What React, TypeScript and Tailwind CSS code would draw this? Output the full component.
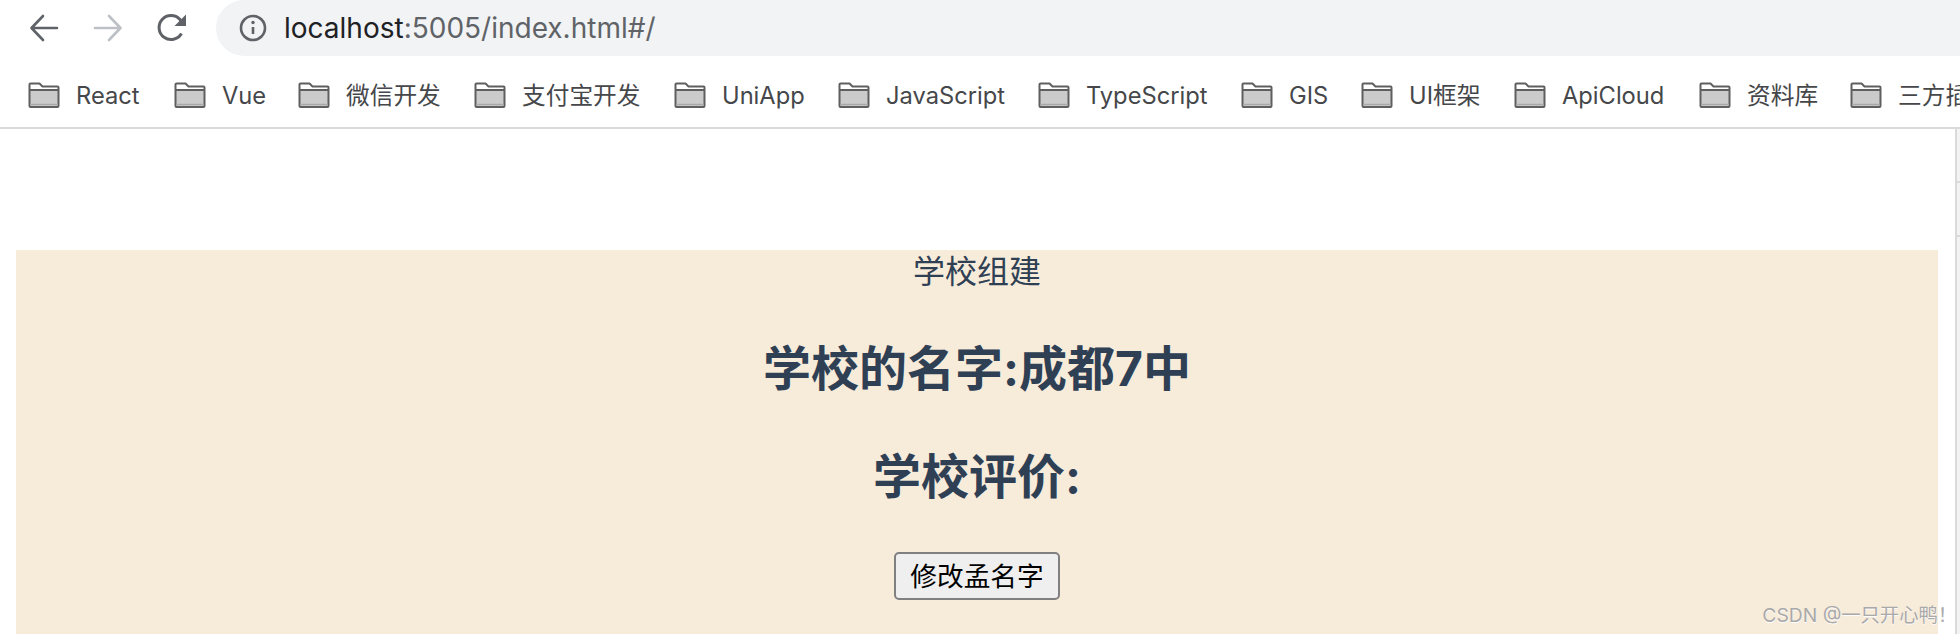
const bookmarks = [
  { label: "React", width: "w-[146px]" },
  { label: "Vue", width: "w-[124px]" },
  { label: "微信开发", width: "w-[176px]" },
  { label: "支付宝开发", width: "w-[200px]" },
  { label: "UniApp", width: "w-[164px]" },
  { label: "JavaScript", width: "w-[200px]" },
  { label: "TypeScript", width: "w-[203px]" },
  { label: "GIS", width: "w-[120px]" },
  { label: "UI框架", width: "w-[153px]" },
  { label: "ApiCloud", width: "w-[185px]" },
  { label: "资料库", width: "w-[151px]" },
  { label: "三方插件", width: "w-[200px]" },
];

function Folder() {
  return (
    <svg width="32" height="26" viewBox="0 0 32 26" className="shrink-0">
      <path d="M1.5 8V2.5a1 1 0 0 1 1-1h9l3 3h15a1 1 0 0 1 1 1V24a1 1 0 0 1-1 1h-27a1 1 0 0 1-1-1Z" fill="#fff" />
      <path d="M2 8h28v17H2Z" fill="#cbcbcb" />
      <path d="M1.5 8V2.5a1 1 0 0 1 1-1h9l3 3h15a1 1 0 0 1 1 1V24a1 1 0 0 1-1 1h-27a1 1 0 0 1-1-1Z M1.5 8h29" fill="none" stroke="#5f5f5f" strokeWidth="2" strokeLinejoin="round" />
      <path d="M2 22.5h28" stroke="#a8a8a8" strokeWidth="1.5" />
    </svg>
  );
}

export default function App() {
  return (
    <div className="h-[634px] w-[1960px] overflow-hidden bg-white relative font-['Inter','Noto_Sans_CJK_SC',sans-serif]">
      <div className="flex h-[56px] items-center">
        <div className="flex w-[216px] shrink-0 items-center pl-[29px]">
          <svg width="30" height="30" viewBox="0 0 30 30" fill="none" stroke="#5f6368" strokeWidth="2.6" strokeLinecap="round" strokeLinejoin="round">
            <path d="M28 15H3M14 3 2.5 15 14 27" />
          </svg>
          <svg className="ml-[34px]" width="30" height="30" viewBox="0 0 30 30" fill="none" stroke="#bdc1c6" strokeWidth="2.6" strokeLinecap="round" strokeLinejoin="round">
            <path d="M2 15h25M16 3l11.500 12L16 27" />
          </svg>
          <svg className="ml-[34px]" width="30" height="30" viewBox="0 0 30 30" fill="none">
            <path d="M24.500 20.500A12 12 0 1 1 23 6.500L25 9" stroke="#5f6368" strokeWidth="3" />
            <path d="M29 1.500V13H17.500Z" fill="#5f6368" />
          </svg>
        </div>
        <div className="flex h-[56px] flex-1 items-center rounded-l-[28px] bg-[#f1f3f4] pl-[22px] text-[28px] text-[#5f6368]">
          <svg width="30" height="30" viewBox="0 0 30 30" fill="none" className="shrink-0">
            <circle cx="15" cy="15" r="12" stroke="#5f6368" strokeWidth="2.6" />
            <path d="M15 14v7" stroke="#5f6368" strokeWidth="2.6" />
            <circle cx="15" cy="9.500" r="1.700" fill="#5f6368" />
          </svg>
          <span className="ml-[16px]">
            <span className="text-[#202124]">localhost</span>:5005/index.html#/
          </span>
        </div>
      </div>
      <div className="flex h-[73px] items-center overflow-hidden border-b-2 border-[#dadada] pl-[28px] pt-[8px] text-[23.700px] text-[#45474a]">
        {bookmarks.map((b) => (
          <div key={b.label} className={`flex shrink-0 items-center gap-4 whitespace-nowrap ${b.width}`}>
            <Folder />
            <span>{b.label}</span>
          </div>
        ))}
      </div>
      <div className="flex h-[505px]">
        <main className="flex-1 pl-4 pr-[17px] pt-[121px]">
          <div className="flex h-[384px] flex-col items-center bg-[#f7ebda] text-[#2f4054]">
            <div className="text-[32px] leading-[46px] -mt-[1px]">学校组建</div>
            <h1 className="mt-[39px] text-[48px] leading-[70px] font-bold">学校的名字:成都7中</h1>
            <h1 className="mt-[38px] text-[48px] leading-[70px] font-bold">学校评价:</h1>
            <button className="mt-[40px] h-[48px] w-[166px] rounded-[5px] border-2 border-[#808080] bg-[#efefef] text-[26.700px] text-black">
              修改孟名字
            </button>
          </div>
        </main>
        <aside className="flex w-[5px] flex-col border-l-2 border-[#dadada] bg-[#f3f3f3]">
          <div className="h-[54px] border-b-2 border-[#dadada]" />
          <div className="h-[54px] border-b-2 border-[#dadada]" />
        </aside>
      </div>
      <div className="absolute right-[3px] top-[602px] text-[19.300px] leading-[26px] text-[#a9a9a9] [text-shadow:0_1px_1px_#fff]">
        CSDN @一只开心鸭！
      </div>
    </div>
  );
}
